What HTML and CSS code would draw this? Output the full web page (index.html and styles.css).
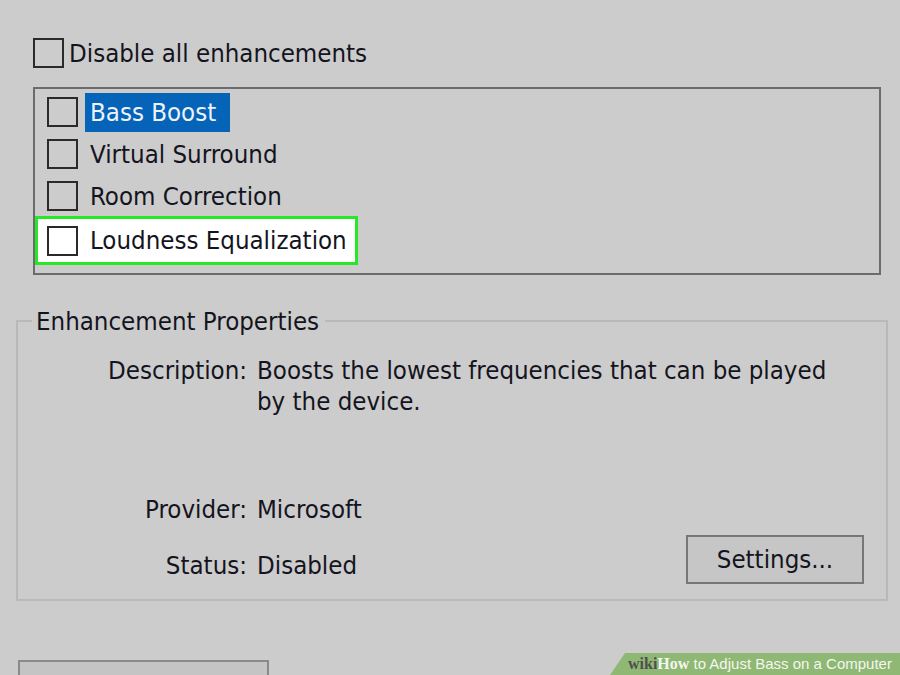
FILE: index.html
```html
<!DOCTYPE html>
<html>
<head>
<meta charset="utf-8">
<link rel="stylesheet" href="styles.css">
</head>
<body>
<div class="page">
  <div class="top-check">
    <span class="box"></span>
    <span class="label">Disable all enhancements</span>
  </div>

  <div class="listbox">
    <div class="row">
      <span class="box"></span>
      <span class="label selected">Bass Boost</span>
    </div>
    <div class="row">
      <span class="box"></span>
      <span class="label">Virtual Surround</span>
    </div>
    <div class="row">
      <span class="box"></span>
      <span class="label">Room Correction</span>
    </div>
    <div class="row marked">
      <span class="box"></span>
      <span class="label">Loudness Equalization</span>
    </div>
  </div>

  <fieldset class="props">
    <legend>Enhancement Properties</legend>
    <div class="grid first">
      <div class="key">Description:</div>
      <div class="val">Boosts the lowest frequencies that can be played<br>by the device.</div>
    </div>
    <div class="grid provider">
      <div class="key">Provider:</div>
      <div class="val">Microsoft</div>
    </div>
    <div class="grid status">
      <div class="key">Status:</div>
      <div class="val">Disabled</div>
      <button class="btn settings">Settings...</button>
    </div>
  </fieldset>

  <div class="bottom-btn"></div>
</div>

<div class="banner">
  <span class="wiki">wiki</span><span class="how">How</span><span class="title"> to Adjust Bass on a Computer</span>
</div>
</body>
</html>
```

FILE: styles.css
```css
html, body {
  margin: 0;
  padding: 0;
}
body {
  width: 900px;
  height: 675px;
  overflow: hidden;
  background: #cccccc;
  font-family: "DejaVu Sans Condensed", "DejaVu Sans", sans-serif;
  font-stretch: condensed;
  font-size: 25.6px;
  color: #14141e;
  position: relative;
}
.page {
  display: flex;
  flex-direction: column;
  padding-top: 38px;
}
.box {
  display: inline-block;
  box-sizing: border-box;
  width: 31px;
  height: 30px;
  border: 2px solid #2a2a2a;
  flex: none;
}
.top-check {
  display: flex;
  align-items: center;
  gap: 5px;
  margin-left: 33px;
  height: 30px;
}
.top-check .label {
  line-height: 30px;
  white-space: nowrap;
}
.listbox {
  box-sizing: border-box;
  margin: 19px 0 0 33px;
  width: 848px;
  height: 188px;
  border: 2px solid #6c6c6c;
  padding-top: 2px;
  display: flex;
  flex-direction: column;
}
.row {
  display: flex;
  align-items: center;
  height: 42px;
  padding-left: 12px;
  gap: 7px;
}
.row .label {
  padding: 0 5px;
  height: 39px;
  line-height: 39px;
  white-space: nowrap;
}
.row .label.selected {
  padding-right: 14px;
  background: #0564b8;
  color: #eef2fa;
}
.row.marked {
  box-sizing: border-box;
  margin-top: -1px;
  height: 49px;
  width: 323px;
  border: 3px solid #27e827;
  background: #ffffff;
  padding-left: 9px;
}
.props {
  box-sizing: border-box;
  margin: 31px 0 0 16px;
  width: 872px;
  height: 295px;
  border: 2px solid #b9b9b9;
  padding: 0;
}
.props legend {
  margin-left: 14px;
  padding: 0 6px 0 4px;
  line-height: 30px;
}
.grid {
  display: grid;
  grid-template-columns: 229px 1fr auto;
  column-gap: 10px;
  line-height: 31px;
}
.grid.first {
  margin-top: 19px;
}
.key {
  text-align: right;
}
.provider {
  margin-top: 77px;
}
.status {
  margin-top: 21px;
  align-items: center;
}
.btn {
  font: inherit;
  color: inherit;
  box-sizing: border-box;
  width: 178px;
  height: 49px;
  background: #c6c6c6;
  border: 2px solid #777777;
  padding: 0;
  margin-right: 22px;
  margin-top: -11px;
}
.bottom-btn {
  box-sizing: border-box;
  margin: 59px 0 0 18px;
  width: 251px;
  height: 40px;
  border: 2px solid #8a8a8a;
  background: #c4c4c4;
}
.banner {
  position: absolute;
  right: 0;
  bottom: 0;
  width: 290px;
  height: 22px;
  background: #8fb874;
  clip-path: polygon(15px 0, 100% 0, 100% 100%, 0 100%);
  font-family: "Liberation Sans", Arial, sans-serif;
  font-stretch: normal;
  font-size: 15px;
  line-height: 21px;
  padding-left: 18px;
  box-sizing: border-box;
  white-space: nowrap;
}
.banner .wiki {
  font-family: "Liberation Serif", serif;
  font-weight: bold;
  color: #4f4f4f;
  font-size: 16px;
}
.banner .how {
  font-family: "Liberation Serif", serif;
  font-weight: bold;
  color: #f4f6f0;
  font-size: 16px;
}
.banner .title {
  color: #f4f6f0;
}
```
